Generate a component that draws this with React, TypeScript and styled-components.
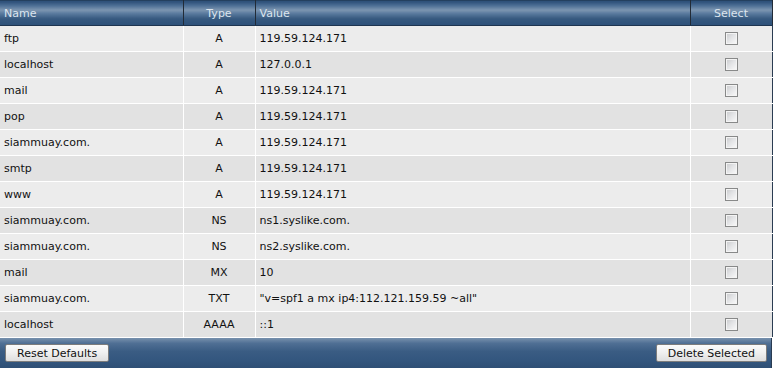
import * as React from 'react';
import styled, { createGlobalStyle } from 'styled-components';

const GlobalStyle = createGlobalStyle`
  html, body {
    margin: 0;
    padding: 0;
    background: #ffffff;
  }
  body {
    font-family: 'DejaVu Sans', Verdana, sans-serif;
    font-size: 11px;
    color: #111;
  }
`;

interface DnsRecord {
  name: string;
  type: string;
  value: string;
}

const records: DnsRecord[] = [
  { name: 'ftp', type: 'A', value: '119.59.124.171' },
  { name: 'localhost', type: 'A', value: '127.0.0.1' },
  { name: 'mail', type: 'A', value: '119.59.124.171' },
  { name: 'pop', type: 'A', value: '119.59.124.171' },
  { name: 'siammuay.com.', type: 'A', value: '119.59.124.171' },
  { name: 'smtp', type: 'A', value: '119.59.124.171' },
  { name: 'www', type: 'A', value: '119.59.124.171' },
  { name: 'siammuay.com.', type: 'NS', value: 'ns1.syslike.com.' },
  { name: 'siammuay.com.', type: 'NS', value: 'ns2.syslike.com.' },
  { name: 'mail', type: 'MX', value: '10' },
  { name: 'siammuay.com.', type: 'TXT', value: '"v=spf1 a mx ip4:112.121.159.59 ~all"' },
  { name: 'localhost', type: 'AAAA', value: '::1' },
];

const Panel = styled.div`
  width: 772px;
`;

const Table = styled.table`
  width: 100%;
  border-collapse: collapse;
  table-layout: fixed;
`;

const barGradient = `linear-gradient(
  to bottom,
  #2c4f78 0%,
  #4f7096 18%,
  #7d96b1 36%,
  #5a7a9e 50%,
  #36597f 72%,
  #2d5179 100%
)`;

const HeadCell = styled.th<{ $align?: 'left' | 'center' }>`
  height: 24px;
  padding: 0 4px;
  background: ${barGradient};
  color: #dce5ee;
  font-weight: normal;
  text-align: ${(p) => p.$align ?? 'left'};
  border-top: 1px solid #24405f;
  border-bottom: 1px solid #1e3550;
  border-left: 1px solid #9aa4ae;
  border-right: 1px solid #222b36;
  &:first-child {
    border-left: none;
  }
`;

const Row = styled.tr<{ $odd: boolean }>`
  background: ${(p) => (p.$odd ? '#ececec' : '#e2e2e2')};
`;

const Cell = styled.td<{ $align?: 'left' | 'center' }>`
  height: 25px;
  padding: 0 4px;
  text-align: ${(p) => p.$align ?? 'left'};
  border-bottom: 1px solid #ffffff;
  border-left: 1px solid #ffffff;
  white-space: nowrap;
  &:first-child {
    border-left: none;
  }
  &:last-child {
    border-right: 1px solid #2a3c52;
  }
`;

const CheckBox = styled.span`
  display: inline-block;
  vertical-align: middle;
  width: 11px;
  height: 11px;
  border: 1px solid #888989;
  background: linear-gradient(135deg, #c8c9cc 0%, #e2e3e5 45%, #fbfbfb 100%);
  box-shadow: inset 0 0 0 1px #f4f4f4;
`;

const Footer = styled.div`
  display: flex;
  justify-content: space-between;
  align-items: center;
  height: 30px;
  padding: 0 4px 0 5px;
  background: linear-gradient(
    to bottom,
    #7891ad 0%,
    #4f6f94 18%,
    #3a5c83 45%,
    #33567e 75%,
    #2e4f75 100%
  );
  border-right: 1px solid #2a3c52;
  box-sizing: border-box;
`;

const Button = styled.button`
  height: 18px;
  padding: 0 11px;
  font-family: 'DejaVu Sans', Verdana, sans-serif;
  font-size: 11px;
  color: #111;
  background: linear-gradient(to bottom, #fbfbfb 0%, #efefef 50%, #dedede 100%);
  border: 1px solid #7c7c7c;
  border-radius: 2px;
  cursor: pointer;
`;

export default function App() {
  return (
    <>
      <GlobalStyle />
      <Panel>
        <Table>
          <colgroup>
            <col style={{ width: 183 }} />
            <col style={{ width: 72 }} />
            <col style={{ width: 435 }} />
            <col style={{ width: 82 }} />
          </colgroup>
          <thead>
            <tr>
              <HeadCell>Name</HeadCell>
              <HeadCell $align="center">Type</HeadCell>
              <HeadCell>Value</HeadCell>
              <HeadCell $align="center">Select</HeadCell>
            </tr>
          </thead>
          <tbody>
            {records.map((r, i) => (
              <Row key={i} $odd={i % 2 === 0}>
                <Cell>{r.name}</Cell>
                <Cell $align="center">{r.type}</Cell>
                <Cell>{r.value}</Cell>
                <Cell $align="center">
                  <CheckBox />
                </Cell>
              </Row>
            ))}
          </tbody>
        </Table>
        <Footer>
          <Button>Reset Defaults</Button>
          <Button>Delete Selected</Button>
        </Footer>
      </Panel>
    </>
  );
}
